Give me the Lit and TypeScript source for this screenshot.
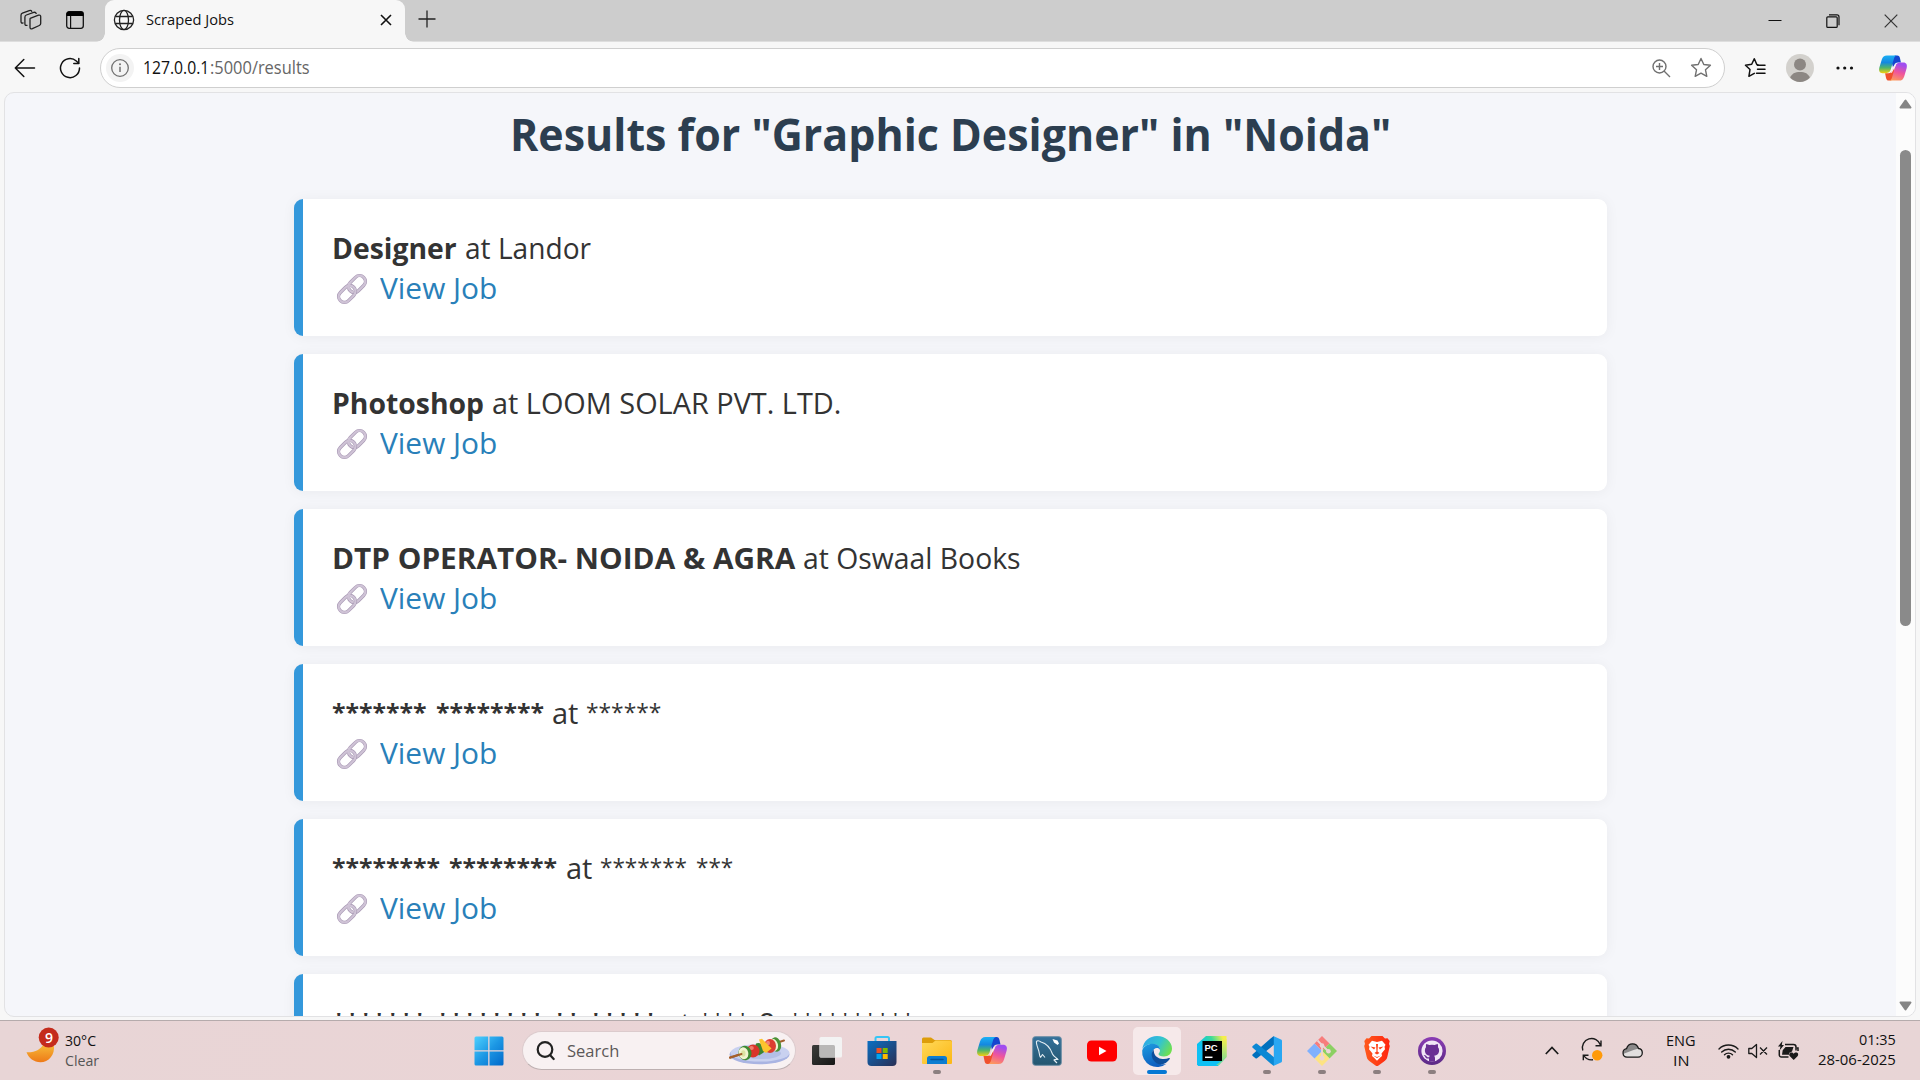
import { LitElement, html, css } from "lit";
import { customElement, property } from "lit/decorators.js";
import { classMap } from "lit/directives/class-map.js";

/** A run of text condensed or widened to take exactly `w` pixels. */
@customElement("fit-text")
class FitText extends LitElement {
  @property({ type: Number }) w = 0;
  @property() text = "";

  static styles = css`
    :host { display: inline-block; white-space: pre; }
    .run { display: inline-block; transform-origin: 0 50%; }
  `;

  render() {
    return html`<span class="run">${this.text}</span>`;
  }

  updated() {
    const run = this.renderRoot.querySelector(".run") as HTMLElement;
    const natural = run.offsetWidth;
    this.style.width = this.w + "px";
    if (natural > 0) {
      run.style.marginRight = this.w - natural + "px";
      run.style.transform = `scaleX(${this.w / natural})`;
    }
  }
}

interface Run { t: string; w: number; gap?: number; bold?: boolean; }

const JOBS: Run[][] = [
  [{ t: "Designer", w: 125, bold: true }, { t: "at Landor", w: 126, gap: 7.5 }],
  [{ t: "Photoshop", w: 152.5, bold: true }, { t: "at LOOM SOLAR PVT. LTD.", w: 349.5, gap: 7.5 }],
  [{ t: "DTP OPERATOR- NOIDA & AGRA", w: 463, bold: true }, { t: "at Oswaal Books", w: 218, gap: 8 }],
  [
    { t: "*******", w: 95, bold: true }, { t: "********", w: 108.5, gap: 8.5, bold: true },
    { t: "at", w: 26, gap: 8 }, { t: "******", w: 75, gap: 8 },
  ],
  [
    { t: "********", w: 108.5, bold: true }, { t: "********", w: 108.5, gap: 8, bold: true },
    { t: "at", w: 26, gap: 9 }, { t: "*******", w: 87.5, gap: 7.5 }, { t: "***", w: 37.5, gap: 8.5 },
  ],
  [
    { t: "*******", w: 95, bold: true }, { t: "********", w: 108.5, gap: 8.5, bold: true },
    { t: "**", w: 27, gap: 9, bold: true }, { t: "*****", w: 68, gap: 8.5, bold: true },
    { t: "at", w: 26, gap: 8 }, { t: "****", w: 50, gap: 8 },
    { t: "&", w: 24, gap: 8 }, { t: "**********", w: 125, gap: 8 },
  ],
];

const chain = html`<svg class="chain" width="30" height="30" viewBox="0 0 30 30" fill="none">
  <g transform="rotate(-45 15 15)">
    <rect x="12.5" y="9.2" width="19" height="11.6" rx="5.8" stroke="#a797b3" stroke-width="3.4"/>
    <rect x="12.5" y="9.2" width="19" height="11.6" rx="5.8" stroke="#cfc3d6" stroke-width="2.2"/>
    <rect x="-1.5" y="9.2" width="19" height="11.6" rx="5.8" stroke="#a797b3" stroke-width="3.4"/>
    <rect x="-1.5" y="9.2" width="19" height="11.6" rx="5.8" stroke="#cfc3d6" stroke-width="2.2"/>
    <path d="M13 12.5C14 10 16 9.2 18.3 9.2" stroke="#cfc3d6" stroke-width="2.4"/>
  </g>
</svg>`;

const copilot = (id: string, w: number, h: number) => html`<svg width=${w} height=${h} viewBox="0 0 30 27">
  <defs>
    <linearGradient id="${id}a" x1="0" y1="0" x2="0" y2="1"><stop offset="0" stop-color="#1bb0f5"/><stop offset=".4" stop-color="#1488e0"/><stop offset=".7" stop-color="#4fb56a"/><stop offset="1" stop-color="#f2cf10"/></linearGradient>
    <linearGradient id="${id}b" x1=".3" y1="0" x2="0" y2="1"><stop offset="0" stop-color="#a04df0"/><stop offset=".45" stop-color="#f0559c"/><stop offset="1" stop-color="#ffa552"/></linearGradient>
  </defs>
  <path d="M17 0h2.5c2 0 2.500 1 3 3l1 4.500h-3c-2.500 0-3.500 1-4.200 3L15 13l-2-8z" fill="#1546cf"/>
  <path d="M13 27h-2.500c-2 0-2.500-1-3-3L6.500 19h3.500c2.500 0 3.500-1 4.200-3L16 12l1.500 9z" fill="#f0502d"/>
  <path d="M8.500 0H19c-1.700.3-2.500 1.700-3 3.500l-3.500 12C11.700 18 10 19 7.500 19H4C.5 19-.5 16.500.4 13L3 4.500C4 1.500 5.500 0 8.500 0z" fill="url(#${id}a)"/>
  <path d="M21.500 27H11c1.700-.3 2.500-1.700 3-3.500l3.500-12C18.300 9 20 7.700 22.500 7.700H26c3.500 0 4.500 2.500 3.600 6L27 22.500c-1 3-2.500 4.500-5.500 4.500z" fill="url(#${id}b)"/>
  <path d="M16.800 10.300h1.400l-4.400 8.400h-1.600c.8-.8 1.200-1.700 1.600-2.800l1.300-3.300c.4-1 .9-1.700 1.700-2.300z" fill="#f6eef2"/>
</svg>`;

const ICON = {
  workspaces: html`<svg width="22" height="22" viewBox="0 0 22 22" fill="none" stroke="#222" stroke-width="1.300" stroke-linejoin="round" stroke-linecap="round">
    <path d="M10.200 9.300 18.500 6.200c1.200-.4 2.200.2 2.200 1.400v6.900c0 1-.5 1.600-1.400 2l-6.900 3.200c-1.400.6-2.400 0-2.400-1.400v-7.500c0-.6 0-1.100.2-1.500z"/>
    <path d="M7 16.300c-1.400.4-2.100-.2-2.100-1.500V8.200c0-1.200.5-1.800 1.500-2.200l7.300-2.600c1.300-.4 2.100 0 2.500 1"/>
    <path d="M3 14c-1.400.3-2-.2-2-1.400V6.300c0-1.200.4-1.700 1.400-2.100l6.900-2.600c1.200-.4 2-.1 2.500.7"/></svg>`,
  tabActions: html`<svg width="18" height="18" viewBox="0 0 18 18"><rect x=".7" y=".7" width="16.600" height="16.600" rx="2.500" fill="none" stroke="#111" stroke-width="1.300"/><path d="M.5 5V3A2.500 2.500 0 0 1 3 .5h12A2.500 2.500 0 0 1 17.500 3v2z" fill="#000"/><path d="M4.600 5v12" stroke="#111" stroke-width="1.200"/></svg>`,
  globe: html`<svg width="22" height="22" viewBox="0 0 22 22" fill="none" stroke="#222" stroke-width="1.300"><circle cx="11" cy="11" r="9.600"/><ellipse cx="11" cy="11" rx="4.500" ry="9.600"/><path d="M2.300 7.500h17.400M2.300 14.500h17.400"/></svg>`,
  tabClose: html`<svg width="12" height="12" viewBox="0 0 12 12" stroke="#111" stroke-width="1.600"><path d="m1 1 10 10M11 1 1 11"/></svg>`,
  plus: html`<svg width="18" height="18" viewBox="0 0 18 18" stroke="#222" stroke-width="1.300"><path d="M9 .5v17M.5 9h17"/></svg>`,
  min: html`<svg width="14" height="14" viewBox="0 0 14 14" stroke="#111"><path d="M.5 6.500h13"/></svg>`,
  max: html`<svg width="14" height="14" viewBox="0 0 14 14" fill="none" stroke="#111" stroke-width="1.200"><rect x=".8" y="2.800" width="10.400" height="10.600" rx="1"/><path d="M3 .9h8a2 2 0 0 1 2 2v8.300"/></svg>`,
  close: html`<svg width="14" height="14" viewBox="0 0 14 14" stroke="#333" stroke-width="1.200"><path d="m.7.7 12.600 12.600M13.300.7.7 13.300"/></svg>`,
  back: html`<svg width="22" height="20" viewBox="0 0 22 20" fill="none" stroke="#111" stroke-width="1.500" stroke-linecap="round" stroke-linejoin="round"><path d="M20.500 10H1.300M9.800 1.500 1.300 10l8.500 8.500"/></svg>`,
  reload: html`<svg width="22" height="22" viewBox="0 0 22 22" fill="none" stroke="#111" stroke-width="1.500" stroke-linecap="round"><path d="M20.500 11A9.500 9.500 0 1 1 17.300 4l2.300 2.200"/><path d="M19.800 1.500v5h-5" stroke-linejoin="round"/></svg>`,
  info: html`<svg width="28" height="28" viewBox="0 0 28 28"><circle cx="14" cy="14" r="14" fill="#f3f3f3"/><circle cx="14" cy="14" r="8.300" fill="none" stroke="#707070" stroke-width="1.300"/><path d="M14 12.800V18" stroke="#707070" stroke-width="1.500"/><circle cx="14" cy="10.300" r="1" fill="#707070"/></svg>`,
  zoom: html`<svg width="19" height="19" viewBox="0 0 19 19" fill="none" stroke="#707070" stroke-width="1.400"><circle cx="7.500" cy="7.500" r="6.500"/><path d="m12 12 6 6M7.500 4v7M4 7.500h7"/></svg>`,
  star: html`<svg width="22" height="22" viewBox="0 0 22 22" fill="none" stroke="#707070" stroke-width="1.400" stroke-linejoin="round"><path d="m11 1.500 2.800 6 6.600.8-4.900 4.500 1.300 6.500L11 16.100l-5.800 3.200 1.300-6.500-4.900-4.500 6.600-.8z"/></svg>`,
  favs: html`<svg width="22" height="22" viewBox="0 0 22 22" fill="none" stroke="#111" stroke-width="1.500" stroke-linejoin="round" stroke-linecap="round"><path d="M14 8 12.700 7.300 10.300 1.800 7.700 7.300 1.500 8.300 6 12.500 4.900 19.300 10.300 16.400"/><path d="M13.500 8.200H21M13.500 12.300H21M12.500 16.300H21"/></svg>`,
  avatar: html`<svg width="28" height="28" viewBox="0 0 28 28"><circle cx="14" cy="14" r="14" fill="#d3d1cd"/><circle cx="14" cy="10.600" r="6" fill="#8c8783"/><path d="M4.200 23.800C5.500 19.700 9 18 14 18s8.500 1.700 9.800 5.800A14 14 0 0 1 14 28a14 14 0 0 1-9.800-4.200z" fill="#8c8783"/></svg>`,
  dots: html`<svg width="18" height="4" viewBox="0 0 18 4" fill="#111"><circle cx="2" cy="2" r="1.600"/><circle cx="8.700" cy="2" r="1.600"/><circle cx="15.500" cy="2" r="1.600"/></svg>`,
  arrowUp: html`<svg width="13" height="10" viewBox="0 0 13 10"><path d="M6.500 1.500 11.500 8.500H1.500z" fill="#858585" stroke="#858585" stroke-width="2" stroke-linejoin="round"/></svg>`,
  arrowDown: html`<svg width="13" height="10" viewBox="0 0 13 10"><path d="M6.500 8.500 11.500 1.500H1.500z" fill="#858585" stroke="#858585" stroke-width="2" stroke-linejoin="round"/></svg>`,
  moon: html`<svg width="34" height="38" viewBox="0 0 34 38"><defs><linearGradient id="mo" x1="0" y1="0" x2="0" y2="1"><stop offset="0" stop-color="#f7bf3a"/><stop offset="1" stop-color="#ee7a18"/></linearGradient></defs>
    <path d="M.5 25.300c8 .5 15-3 17.500-9.300l9.800 1.500C29.500 28 22.500 35.300 14.500 35.300 8 35.300 2.500 31 .5 25.300z" fill="url(#mo)"/><circle cx="22.700" cy="10.500" r="10" fill="#c42b1c"/></svg>`,
  windows: html`<svg width="30" height="30" viewBox="0 0 30 30"><defs><linearGradient id="wi" gradientUnits="userSpaceOnUse" x1="0" y1="0" x2="30" y2="30"><stop offset="0" stop-color="#4fd3ff"/><stop offset=".5" stop-color="#1c97e4"/><stop offset="1" stop-color="#0067c9"/></linearGradient></defs><path fill="url(#wi)" d="M2 .5h12.200v13.700H.5V2A1.500 1.500 0 0 1 2 .5zM15.500.5H28A1.500 1.500 0 0 1 29.500 2v12.200h-14zM.5 15.500h13.700v14H2A1.500 1.500 0 0 1 .5 28zM15.500 15.500h14V28a1.500 1.500 0 0 1-1.500 1.500H15.500z"/></svg>`,
  search: html`<svg width="19" height="20" viewBox="0 0 19 20" fill="none" stroke="#222" stroke-width="2.200" stroke-linecap="round"><circle cx="9" cy="8.500" r="7.300"/><path d="m14 14 3.700 4"/></svg>`,
  kebab: html`<svg width="62" height="28" viewBox="0 0 62 28"><ellipse cx="30.500" cy="17.500" rx="30" ry="9.800" fill="#a9b4e2"/><ellipse cx="31" cy="15.800" rx="29.500" ry="8.800" fill="#c9d1f0"/><ellipse cx="32" cy="16.500" rx="20" ry="5.500" fill="#b3bfe6"/>
    <path d="M1 20.500 55 3.500" stroke="#a4602c" stroke-width="2" stroke-linecap="round"/>
    <ellipse cx="47" cy="7.500" rx="5" ry="7.300" fill="#4b9136" transform="rotate(-15 47 7.500)"/><ellipse cx="45" cy="8" rx="4" ry="6" fill="#eef3cf" transform="rotate(-15 45 8)"/>
    <ellipse cx="41" cy="9" rx="6" ry="7" fill="#dc3d30"/><ellipse cx="39" cy="6" rx="2" ry="2.300" fill="#f08474"/>
    <path d="M27 6.500c4-2 9 2 9 8L30 18.500l-5-5z" fill="#3c8431"/>
    <path d="M30 2.500 33 1.800 42.500 11.500l-5.500 4.500-3-2z" fill="#fcc42d"/>
    <circle cx="24" cy="14" r="6.500" fill="#d9352b"/><ellipse cx="22.500" cy="11" rx="2.300" ry="2" fill="#f07d6d"/>
    <ellipse cx="16" cy="16" rx="6.500" ry="7.300" fill="#3f8a32" transform="rotate(-15 16 16)"/><ellipse cx="14.500" cy="16.300" rx="4.800" ry="6" fill="#f2f4d0" transform="rotate(-15 14.500 16.300)"/>
    <ellipse cx="14.300" cy="16.500" rx="2.200" ry="3.200" fill="#dbe3a0"/><path d="M1 20.700 12.500 17" stroke="#a4602c" stroke-width="2" stroke-linecap="round"/></svg>`,
  taskView: html`<svg width="30" height="28" viewBox="0 0 30 28"><defs><linearGradient id="tv" x1="0" y1="0" x2="1" y2="1"><stop offset="0" stop-color="#3c3c3a"/><stop offset="1" stop-color="#161616"/></linearGradient></defs><rect y="8" width="23" height="20" rx="1.500" fill="url(#tv)"/><rect x="7.500" width="22.500" height="20.500" rx="1.500" fill="#f3f3f3"/><path d="M7.500 8H21.500a1.500 1.500 0 0 1 1.500 1.500v11H9A1.500 1.500 0 0 1 7.500 19z" fill="#b9b8b7"/></svg>`,
  store: html`<svg width="30" height="30" viewBox="0 0 30 30"><defs><linearGradient id="st" x1="0" y1="0" x2="1" y2="1"><stop offset="0" stop-color="#0a6fc2"/><stop offset="1" stop-color="#2a2f55"/></linearGradient></defs><path d="M8.500 6V2.500A1.500 1.500 0 0 1 10 1h10.500A1.500 1.500 0 0 1 22 2.500V6" fill="none" stroke="#35c5f5" stroke-width="2"/><path d="M.5 5h29v21a4 4 0 0 1-4 4h-21a4 4 0 0 1-4-4z" fill="url(#st)"/><path d="M9.500 12h5v5h-5z" fill="#f25022"/><path d="M15.700 12h5v5h-5z" fill="#7fba00"/><path d="M9.500 18h5v5h-5z" fill="#00a4ef"/><path d="M15.700 18h5v5h-5z" fill="#ffb900"/></svg>`,
  folder: html`<svg width="30" height="27" viewBox="0 0 30 27"><defs><linearGradient id="fo" x1="0" y1="0" x2="1" y2="1"><stop offset="0" stop-color="#ffd95a"/><stop offset="1" stop-color="#fcb714"/></linearGradient></defs><path d="M0 2a1.500 1.500 0 0 1 1.500-1.500H9L12.500 3H28a2 2 0 0 1 2 2v4H0z" fill="#dd9d0b"/><path d="M0 6h10.500l3-2.500H28a2 2 0 0 1 2 2v20.500a1 1 0 0 1-1 1H1a1 1 0 0 1-1-1z" fill="url(#fo)"/><path d="M5 27v-5.500a2.500 2.500 0 0 1 2.500-2.500h15a2.500 2.500 0 0 1 2.500 2.500V27z" fill="#0d7dd1"/><path d="M9 22.500h12" stroke="#07559a" stroke-width="1.500" stroke-linecap="round"/></svg>`,
  mysql: html`<svg width="30" height="30" viewBox="0 0 30 30"><defs><linearGradient id="my" x1="0" y1="0" x2="0" y2="1"><stop offset="0" stop-color="#34719b"/><stop offset="1" stop-color="#24566f"/></linearGradient></defs><rect x=".7" y=".7" width="28.600" height="28.600" rx="2.500" fill="url(#my)" stroke="#6b8ea5"/><path d="M8.500 21.500C7 19 7.500 16.500 6.500 14 5.500 11 4 7.500 4.500 5.500 5 4.500 7 4.500 9 6c6 1.500 9.500 6.500 11.500 12 1 2.500 4 3.500 5.500 5.500-2-.3-3.500 0-4 .5l3 3M8.500 21.500l2-3 2.500 3" fill="none" stroke="#e4eef4" stroke-width="1.100" stroke-linejoin="round"/><path d="m20.500 3 1.500 3.500 3.500 2.500 1.500-1.500-1.500-3z" fill="#fff"/></svg>`,
  youtube: html`<svg width="30" height="22" viewBox="0 0 30 22"><rect y=".4" width="30" height="21.200" rx="4.500" fill="#f00"/><path d="m12 6.800 7.500 4.200-7.500 4.200z" fill="#fff"/></svg>`,
  edge: html`<svg width="30" height="30" viewBox="0 0 30 30"><defs><linearGradient id="e1" x1="0" y1=".2" x2="1" y2=".6"><stop offset="0" stop-color="#2fa6e8"/><stop offset=".55" stop-color="#33c4d0"/><stop offset="1" stop-color="#6fe04f"/></linearGradient><linearGradient id="e2" x1="0" y1="0" x2=".4" y2="1"><stop offset="0" stop-color="#1d9de0"/><stop offset="1" stop-color="#0e5fc0"/></linearGradient></defs>
    <path d="M.3 13C1.500 5 7.500 0 15 0c8.500 0 15 6 15 12.500 0 5-3.500 8-8 8-3.500 0-5.500-1.200-5.500-2.500 0-.8 1.500-1.300 1.500-4C18 11 15.500 8 11 8 6 8 2 10 .3 13z" fill="url(#e1)"/>
    <path d="M.2 14.500C1.500 10 6 7.700 10.800 7.700c4.500 0 7.500 3 7.200 6.200-1-2-4-2.500-6-.7-3.500 3.500-2 10 2.500 13 3 2 7 2.600 10 1.500A15 15 0 0 1 .2 14.500z" fill="url(#e2)"/>
    <path d="M11.500 13.700c-3.800 4-1.500 12.300 5.500 14.500 4 .8 8.500-1.500 10.800-5.500.3-.7-.4-1-.9-.7-4.500 2.300-12.400 1-14.400-4-.6-1.600-.6-3-1-4.300z" fill="#0d4f9c"/></svg>`,
  pycharm: html`<svg width="30" height="30" viewBox="0 0 30 30"><defs><linearGradient id="pc" gradientUnits="userSpaceOnUse" x1="6" y1="14" x2="29" y2="2"><stop offset="0" stop-color="#07c3f2"/><stop offset=".5" stop-color="#3bd99a"/><stop offset=".9" stop-color="#f6ee4a"/></linearGradient><linearGradient id="pd" x1="0" y1="0" x2="0" y2="1"><stop offset="0" stop-color="#f3ee4c"/><stop offset="1" stop-color="#6fd9a0"/></linearGradient></defs><path d="M9 0h20.500v21L21 30H1.500L0 28.500V8z" fill="url(#pc)"/><path d="M0 10h6v15h17l-3 5H1.500L0 28.500z" fill="#0fc0f4"/><path d="M25 3h4.500v18L22 29l-3 0 6-4z" fill="url(#pd)"/><rect x="5.500" y="5" width="19.500" height="20" fill="#000"/><path d="M8 21.300h7.500" stroke="#fff" stroke-width="1.500"/><text x="7.500" y="15" class="pc">PC</text></svg>`,
  vscode: html`<svg width="30" height="30" viewBox="0 0 30 30"><path d="M22 .3v8.500L5 22.300c-.5.400-1 .4-1.500 0L.7 20c-.6-.6-.6-1.300 0-1.800L20.500.9c.5-.4 1-.7 1.500-.6z" fill="#0070bd"/><path d="M22 29.700v-8.500L5 7.700c-.5-.4-1-.4-1.500 0L.7 10c-.6.6-.6 1.300 0 1.800l19.800 17.300c.5.4 1 .7 1.500.6z" fill="#0b88d4"/><path d="M21.800.2 29 3.500c.7.300 1 .8 1 1.500v20c0 .7-.3 1.200-1 1.500l-7.200 3.300z" fill="#29a7f2"/></svg>`,
  git: html`<svg width="30" height="30" viewBox="0 0 30 30"><path d="M15 0 22.500 7.500 15 15 7.500 7.500z" fill="#f77d7c"/><path d="M22.500 7.500 30 15l-7.500 7.500L15 15z" fill="#8cd063"/><path d="M15 15l7.500 7.500L15 30l-7.500-7.500z" fill="#fde383"/><path d="M7.500 7.500 15 15l-7.500 7.500L0 15z" fill="#80b1fd"/><path d="m10.500 4.500 4.500 4.500v13M15.500 9.500l5.500 5.500" stroke="#ebd5d6" stroke-width="1.800" fill="none"/><circle cx="15" cy="9.500" r="2.300" fill="#ebd5d6"/><circle cx="21.500" cy="15.200" r="2.300" fill="#ebd5d6"/><circle cx="15" cy="22" r="2.500" fill="#ebd5d6"/></svg>`,
  brave: html`<svg width="26" height="30" viewBox="0 0 26 30"><defs><linearGradient id="br"><stop offset="0" stop-color="#ff5a1c"/><stop offset="1" stop-color="#ff2510"/></linearGradient></defs><path d="m7.500 0h11L21 2.500l2.500-.3L25.700 5 25 8l.8 2-2.500 11c-.5 2-1.500 3.300-3.300 4.500l-5.500 4c-1 .7-2 .7-3 0l-5.500-4C4.200 24.300 3.200 23 2.700 21L.2 10 1 8 .3 5l2.200-2.800 2.500.3z" fill="url(#br)"/><path d="M8 4.700 13 6l5-1.300 3.500 4-1 2 .5 2.500-3.500 4.300.5 2.500-1.800 1.500-3.200 3.300-3.200-3.300L8 20l.5-2.500L5 13.200l.5-2.500-1-2z" fill="#fff"/><path d="m6.500 10.500 5 1-1.500 2zM19.500 10.500l-5 1 1.500 2zM12 8h2l-.5 7.500 2 1.500-2.500 1.500-2.500-1.500 2-1.500zM9 19.500l4 1.500 4-1.500-4 2.500z" fill="#ff4318"/></svg>`,
  github: html`<svg width="28" height="28" viewBox="0 0 28 28"><defs><linearGradient id="gh" x1="0" y1="0" x2="0" y2="1"><stop offset="0" stop-color="#8a3cb4"/><stop offset="1" stop-color="#5c2a86"/></linearGradient></defs><circle cx="14" cy="14" r="14" fill="url(#gh)"/><circle cx="14" cy="14" r="10.600" fill="#f1e6f5"/><path d="M11 24.500v-3c-2.500.5-3.500-.8-4-2-.3-.7-.8-1-1.300-1.500 1.700-.3 2.500.8 3 1.500.7 1 1.600 1 2.500.7.100-.7.400-1.200.7-1.500-3-.4-5-1.700-5-5.400 0-1.300.4-2.300 1.200-3.200-.1-.5-.4-1.700.2-3.200 1.200 0 2.300.8 3 1.200a10 10 0 0 1 5.400 0c.7-.4 1.800-1.200 3-1.200.6 1.500.3 2.700.2 3.200.8.900 1.200 1.900 1.200 3.200 0 3.700-2 5-5 5.400.5.500.9 1.200.9 2.500v3.300z" fill="#6a2f94"/></svg>`,
  chevron: html`<svg width="14" height="9" viewBox="0 0 14 9" fill="none" stroke="#1a1a1a" stroke-width="1.700"><path d="m.8 8 6.200-6.500L13.200 8"/></svg>`,
  sync: html`<svg width="21" height="21" viewBox="0 0 21 21" fill="none" stroke="#1a1a1a" stroke-width="1.400"><path d="M.8 10.500A9.200 9.200 0 0 1 18.500 5M19 .5v5.300h-5.500M6.500 15.200H1.300v5M1.800 15.500A9.200 9.200 0 0 0 11 19.700"/><circle cx="15.200" cy="15.300" r="5.200" fill="#ff9a0a" stroke="none"/></svg>`,
  cloud: html`<svg width="21" height="15" viewBox="0 0 21 15"><path d="M5 14.200a4.300 4.300 0 0 1-.5-8.500C5.500 2.500 8 .8 10.500.8c3 0 5.200 1.800 6 4.700 2.300.2 3.800 2 3.800 4.300s-1.800 4.400-4.300 4.400z" fill="#e2dfdf"/><path d="M1 11c.3-3 2-5 3.500-5.300C5.500 2.500 8 .8 10.500.8c3 0 5.200 1.800 6 4.700l-5 1.500z" fill="#8b898a"/><path d="M5 14.200a4.300 4.300 0 0 1-.5-8.500C5.500 2.500 8 .8 10.500.8c3 0 5.200 1.800 6 4.700 2.300.2 3.800 2 3.800 4.300s-1.800 4.400-4.300 4.400z" fill="none" stroke="#1a1a1a" stroke-width="1.300"/></svg>`,
  wifi: html`<svg width="21" height="16" viewBox="0 0 21 16" fill="none" stroke="#1a1a1a" stroke-width="1.400" stroke-linecap="round"><path d="M1 6a13.400 13.400 0 0 1 19 0M3.700 9a9.700 9.700 0 0 1 13.600 0M6.500 11.800a5.700 5.700 0 0 1 8 0"/><circle cx="10.500" cy="13.800" r="1.200" fill="#1a1a1a"/></svg>`,
  mute: html`<svg width="20" height="16" viewBox="0 0 20 16" fill="none" stroke="#1a1a1a" stroke-width="1.300" stroke-linejoin="round"><path d="M.8 5.500v5h3L8.500 14.500v-13L3.800 5.500zM12 4.500l7 7M19 4.500l-7 7"/></svg>`,
  battery: html`<svg width="21" height="20" viewBox="0 0 21 20"><path d="M7 3.500h8.500A2.500 2.500 0 0 1 18 6v3.500M10.500 16H3.500A2 2 0 0 1 1.300 14V9" fill="none" stroke="#1a1a1a" stroke-width="1.500"/><path d="M18.500 7h1.500v3" stroke="#1a1a1a" stroke-width="1.500" fill="none"/><path d="M7.500 6h8L14 10.500l-3 1.500v1.800H4l.7-4.500z" fill="#1a1a1a"/><path d="M4.500 0 0 5.500h2.500L1.500 9.500 6 4H3.800z" fill="#1a1a1a"/><path d="m15.700 19-3.800-3.700c-1.200-1.300-.8-3.300.8-3.700 1.200-.3 2.300.2 3 1.200.7-1 1.800-1.500 3-1.200 1.600.4 2 2.400.8 3.700z" fill="#1a1a1a"/></svg>`,
};

const APPS = [
  { icon: ICON.taskView }, { icon: ICON.store }, { icon: ICON.folder, open: true },
  { icon: copilot("tb", 30, 27) }, { icon: ICON.mysql }, { icon: ICON.youtube },
  { icon: ICON.edge, active: true }, { icon: ICON.pycharm }, { icon: ICON.vscode, open: true },
  { icon: ICON.git, open: true }, { icon: ICON.brave, open: true }, { icon: ICON.github, open: true },
] as { icon: unknown; open?: boolean; active?: boolean }[];

@customElement("app-root")
class AppRoot extends LitElement {
  static styles = css`
    :host {
      display: flex; flex-direction: column; width: 1920px; height: 1080px; overflow: hidden;
      background: #f7f7f7; color: #111; font-family: "Open Sans", "Noto Sans", sans-serif;
    }
    * { box-sizing: border-box; }
    svg { display: block; flex: none; overflow: visible; }

    .strip { display: flex; height: 42px; flex: none; background: #cdcdcd; border-bottom: 1px solid #dedede; }
    .strip-left { display: flex; align-items: center; gap: 24px; width: 105px; padding: 0 0 1px 20px; }
    .tab {
      display: flex; align-items: center; width: 300px; height: 42px; padding: 0 13px 2px 8px;
      background: #f7f7f7; border-radius: 9px 9px 0 0; position: relative; font-size: 15px; line-height: 20px;
    }
    .tab::before, .tab::after { content: ""; position: absolute; bottom: 0; width: 9px; height: 9px; }
    .tab::before { left: -9px; background: radial-gradient(circle at 0 0, transparent 8.500px, #f7f7f7 9px); }
    .tab::after { right: -9px; background: radial-gradient(circle at 100% 0, transparent 8.500px, #f7f7f7 9px); }
    .tab-title { margin: 0 auto 2px 11px; }
    .new-tab { display: flex; align-items: center; padding: 0 0 3px 13px; }
    .controls { display: flex; align-items: center; gap: 44px; margin-left: auto; padding: 1px 22px 0 0; }

    .toolbar { display: flex; align-items: center; height: 50px; flex: none; padding: 2px 13px 0 14px; }
    .reload { margin: 0 19px 0 23px; }
    .address {
      display: flex; align-items: center; width: 1625px; height: 40px; padding: 0 12px 0 5px;
      border: 1.500px solid #cfcfcf; border-radius: 20px; background: #fff;
      font-size: 17.500px; line-height: 24px;
    }
    .host, .path { margin-bottom: 2px; }
    .host { margin-left: 9px; }
    .path { margin-right: auto; color: #666; }
    .address .star { margin-left: 19px; }
    .tools { display: flex; align-items: center; flex: 1; padding-left: 19px; }
    .tools .avatar { margin: 0 22px 0 20px; }
    .tools .copilot { margin-left: auto; }

    .frame {
      display: flex; height: 925px; margin: 0 4px; flex: none; overflow: hidden;
      border: 1px solid #e2e2e4; border-radius: 10px; background: #f5f6fa;
    }
    .page { display: flex; flex-direction: column; align-items: center; width: 1891px; padding-top: 11px; }
    .heading { margin: 0 0 35px; height: 60px; font-size: 45px; line-height: 60px; font-weight: 700; color: #2c3e50; }
    .jobs { display: flex; flex-direction: column; gap: 18px; margin: 0; padding: 0; list-style: none; }
    .job {
      width: 1313px; height: 137px; padding: 29px 29px 0; flex: none; background: #fff; color: #333;
      border-left: 9px solid #3498db; border-radius: 9px; box-shadow: 0 1px 14px rgba(0, 0, 0, 0.05);
      font-size: 29px; line-height: 40px;
    }
    .line { display: flex; height: 40px; align-items: baseline; }
    .bold { font-weight: 700; }
    .masked { font-size: 24px; line-height: 20px; position: relative; top: -3px; }
    .masked.bold { top: -3.500px; }
    .link { display: flex; height: 40px; align-items: center; padding-left: 5px; color: #2980b9; text-decoration: none; }
    .chain { margin: 1px 13px 0 0; }
    .job .link-text { margin-top: 0; }
    .scroll { display: flex; flex-direction: column; align-items: center; width: 19px; padding: 6px 0 5px; background: #fcfcfc; }
    .thumb { width: 11px; height: 476px; margin: 41px 0 auto; border-radius: 6px; background: #8a8a8a; }

    .taskbar {
      display: flex; height: 60px; margin-top: auto; flex: none; border-top: 1px solid #b5abac;
      background: linear-gradient(90deg, #e8d5d6, #ebd4d6 50%, #e8d5d6); font-size: 15px; line-height: 20px;
    }
    .weather { display: flex; width: 474px; padding: 6px 0 0 26px; }
    .moon { position: relative; width: 39px; }
    .badge { position: absolute; left: 13px; top: 0; width: 20px; text-align: center; color: #fff; font-size: 14px; font-weight: 600; line-height: 21px; }
    .weather-text { display: flex; flex-direction: column; padding-top: 2.500px; }
    .sub { color: #555; }
    .start { display: flex; align-items: center; width: 48px; }
    .search {
      display: flex; align-items: center; width: 274px; height: 39px; margin: 10px 3px 0 0; padding: 0 4px 0 13px;
      border-radius: 20px; background: #f8f1f2; border: 1px solid #dccbcd; border-bottom-color: #bdb0b1;
    }
    .search-text { margin: 0 auto 0 12px; color: #5c5858; font-size: 16.500px; }
    .apps { display: flex; }
    .app { display: flex; width: 55px; height: 59px; justify-content: center; align-items: center; position: relative; }
    .tile { display: flex; width: 48px; height: 48px; align-items: center; justify-content: center; border-radius: 5px; }
    .active .tile { background: #f6e9ea; }
    .mark { position: absolute; left: 23.500px; bottom: 6px; width: 8px; height: 4px; border-radius: 2px; background: #8c7f80; }
    .active .mark { left: 18px; width: 20px; background: #0678d4; }
    .pc { font: 700 9.500px "Liberation Sans", sans-serif; fill: #fff; }
    .tray { display: flex; margin-left: auto; padding: 0 25px 0 0; align-items: center; }
    .tray .sync { margin: 0 19px 0 23px; }
    .stack { display: flex; flex-direction: column; padding-bottom: 2px; }
    .lang { align-items: center; margin: 0 22px 0 23px; }
    .mute { margin: 0 10px 0 9px; }
    .clock { align-items: flex-end; margin-left: 19px; padding-bottom: 3px; }
  `;

  private renderRun(r: Run) {
    const cls = { bold: !!r.bold, masked: r.t.startsWith("*") };
    return html`<fit-text class=${classMap(cls)} style="margin-left:${r.gap ?? 0}px" .w=${r.w} .text=${r.t}></fit-text>`;
  }

  render() {
    return html`
      <header class="strip">
        <div class="strip-left">${ICON.workspaces}${ICON.tabActions}</div>
        <div class="tab">${ICON.globe}<fit-text class="tab-title" .w=${88} .text=${"Scraped Jobs"}></fit-text>${ICON.tabClose}</div>
        <div class="new-tab">${ICON.plus}</div>
        <div class="controls">${ICON.min}${ICON.max}${ICON.close}</div>
      </header>
      <nav class="toolbar">
        ${ICON.back}<span class="reload">${ICON.reload}</span>
        <div class="address">
          ${ICON.info}
          <fit-text class="host" .w=${66.5} .text=${"127.0.0.1"}></fit-text>
          <fit-text class="path" .w=${99.5} .text=${":5000/results"}></fit-text>
          ${ICON.zoom}<span class="star">${ICON.star}</span>
        </div>
        <div class="tools">
          ${ICON.favs}<span class="avatar">${ICON.avatar}</span>${ICON.dots}
          <span class="copilot">${copilot("bar", 28, 26)}</span>
        </div>
      </nav>
      <main class="frame">
        <section class="page">
          <h1 class="heading"><fit-text .w=${881} .text=${'Results for "Graphic Designer" in "Noida"'}></fit-text></h1>
          <ul class="jobs">
            ${JOBS.map((job) => html`<li class="job">
              <div class="line">${job.map((r) => this.renderRun(r))}</div>
              <a class="link">${chain}<fit-text class="link-text" .w=${117.5} .text=${"View Job"}></fit-text></a>
            </li>`)}
          </ul>
        </section>
        <aside class="scroll">${ICON.arrowUp}<div class="thumb"></div>${ICON.arrowDown}</aside>
      </main>
      <footer class="taskbar">
        <div class="weather">
          <div class="moon">${ICON.moon}<span class="badge">9</span></div>
          <div class="weather-text">
            <fit-text .w=${31} .text=${"30°C"}></fit-text>
            <fit-text class="sub" .w=${34} .text=${"Clear"}></fit-text>
          </div>
        </div>
        <div class="start">${ICON.windows}</div>
        <div class="search">${ICON.search}<fit-text class="search-text" .w=${52} .text=${"Search"}></fit-text>${ICON.kebab}</div>
        <div class="apps">
          ${APPS.map((a) => html`<div class=${classMap({ app: true, active: !!a.active })}>
            <div class="tile">${a.icon}</div>${a.open || a.active ? html`<i class="mark"></i>` : ""}
          </div>`)}
        </div>
        <div class="tray">
          ${ICON.chevron}<span class="sync">${ICON.sync}</span>${ICON.cloud}
          <div class="stack lang">
            <fit-text .w=${30} .text=${"ENG"}></fit-text>
            <fit-text .w=${16} .text=${"IN"}></fit-text>
          </div>
          ${ICON.wifi}<span class="mute">${ICON.mute}</span>${ICON.battery}
          <div class="stack clock">
            <fit-text .w=${36.5} .text=${"01:35"}></fit-text>
            <fit-text .w=${77.5} .text=${"28-06-2025"}></fit-text>
          </div>
        </div>
      </footer>
    `;
  }
}
